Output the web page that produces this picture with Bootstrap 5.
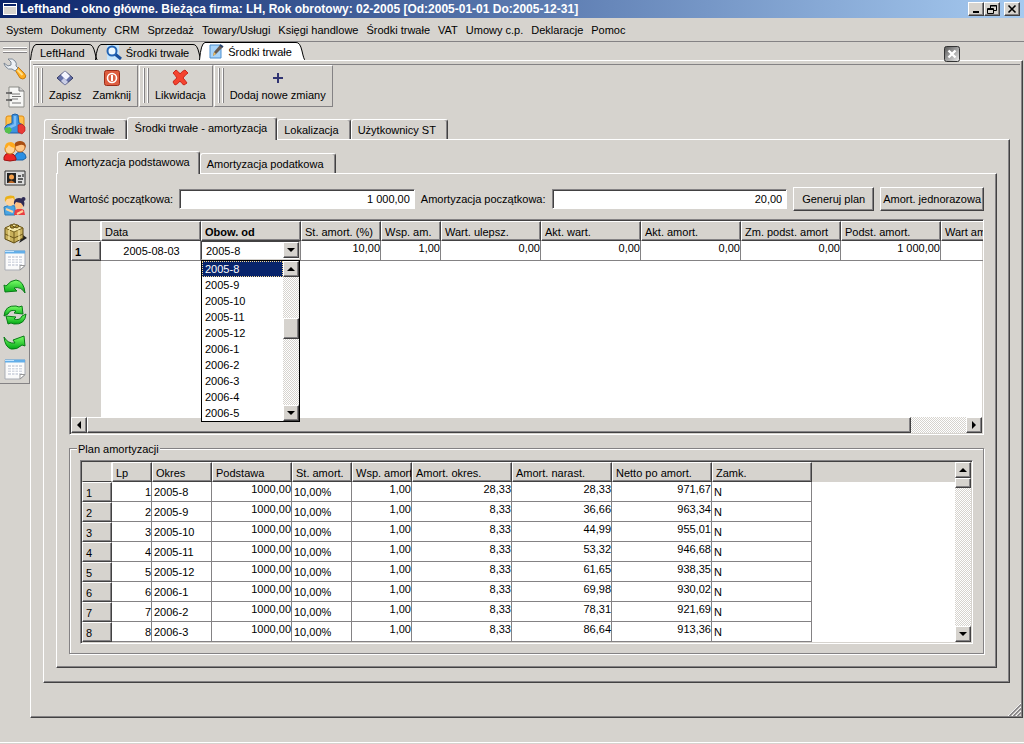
<!DOCTYPE html>
<html lang="pl">
<head>
<meta charset="utf-8">
<meta name="viewport" content="width=device-width, initial-scale=1">
<title>Lefthand - okno główne</title>
<link rel="stylesheet" href="https://cdn.jsdelivr.net/npm/bootstrap@5.3.0/dist/css/bootstrap.min.css">
<style>
:root{--face:#d6d3ce;--shade:#848284;--deep:#424142}
body{background:var(--face);color:#000;font:11px/14px "Liberation Sans",Arial,sans-serif;min-height:100vh}
button,input,select{font:inherit;color:inherit}
svg{display:block;flex:none}
.titlebar{height:18px;padding:0 4px 0 3px;gap:3px;background:linear-gradient(90deg,#0a246a,#a6caf0);color:#fff;font-size:12px;font-weight:bold}
.face-btn{background:var(--face);border:1px solid;border-color:#fff var(--deep) var(--deep) #fff;box-shadow:inset -1px -1px var(--shade);padding:0;border-radius:0;display:flex;align-items:center;justify-content:center}
.win-btn{width:16px;height:14px}
.menubar{height:24px;border-bottom:1px solid var(--shade);padding:0 6px;gap:8px}
.menubar a{color:#000;text-decoration:none;padding:0}
.sidebar{width:30px;height:342px;border:solid var(--shade);border-width:0 1px 1px 0;padding:6px 0 3px 3px}
.sidebar button,.tool button,.doctab,.close-doc{border:0;background:none;padding:0}
.grip-h{width:24px;height:5px;border:solid var(--shade);border-width:1px 0;box-shadow:0 -1px #fff,inset 0 -1px #fff}
.grip-v{width:5px;height:35px;margin-right:-5px;border:solid var(--shade);border-width:0 1px;box-shadow:-1px 0 #fff,inset -1px 0 #fff;flex:none}
.workarea{min-width:0}
.doctabs{height:18px;z-index:2}
.doctab{display:flex;height:16px;margin-right:-3px}
.doctab .face{border-top:1px solid #000;display:flex;align-items:center;gap:4px;height:16px}
.doctab.active{height:18px;z-index:1}
.doctab.active .face{background:#fff;height:18px}
.close-doc{width:16px;height:16px;margin:0 64px -2px auto}
.window{border:1px solid;border-color:#fff var(--deep) var(--deep) #fff;box-shadow:inset -1px -1px var(--shade);position:relative;padding-bottom:34px;margin-right:1px}
.toolbar{border-top:1px solid var(--shade);margin:3px 2px 0}
.tool{border:1px solid;border-color:#fff var(--shade) var(--shade) #fff;height:42px;padding:2px 6px 2px 4px;gap:11px;margin-right:1px}
.tool button{display:flex;flex-direction:column;align-items:center;gap:1px}
.tabset{padding:0 12px}
.tabset-outer{padding-top:10px}
.sheet{border:1px solid;border-color:#fff var(--deep) var(--deep) #fff;box-shadow:inset -1px -1px var(--shade)}
.sheet-main{padding-top:11px;padding-bottom:14px}
.sheet-inner{padding-top:13px;padding-bottom:13px}
.tabrow{padding-left:1px;align-items:flex-end}
.tabrow button{background:var(--face);border:1px solid;border-color:#fff var(--deep) transparent #fff;border-bottom:0;border-radius:3px 3px 0 0;box-shadow:inset -1px 0 var(--shade);height:20px;padding:0 11px 0 6px;text-align:left}
.tabrow button.active{height:23px;margin-bottom:-1px;padding:0 9px 3px 7px;z-index:1}
.field{height:20px;min-width:0;flex:1;border:1px solid;border-color:var(--shade) #fff #fff var(--shade);box-shadow:inset 1px 1px var(--deep);outline:0;background:#fff;text-align:right;padding:0 4px;border-radius:0}
.cmd{height:24px}
.cmd-wide{padding:0 2px}
.formrow{gap:6px}
.grid-box{border:1px solid;border-color:var(--shade) #fff #fff var(--shade);box-shadow:inset 1px 1px var(--deep);padding:1px;overflow:hidden;position:relative}
.grid-body{background:linear-gradient(90deg,var(--face) 30px,#fff 30px)}
.plan-body{background:linear-gradient(var(--face) 20px,transparent 20px),linear-gradient(90deg,var(--face) 30px,#fff 30px)}
.data-grid{table-layout:fixed;border-collapse:separate;border-spacing:0;width:1px}
.data-grid th,.data-grid td{height:20px;padding:0;white-space:nowrap;vertical-align:top}
.data-grid th{background:var(--face);font-weight:normal;border:1px solid;border-color:#fff var(--deep) var(--deep) #fff;box-shadow:inset -1px -1px var(--shade);padding:3px 0 0 3px;overflow:hidden;line-height:14px}
.data-grid thead th:first-child{border-color:var(--face) #fff var(--deep) var(--face);box-shadow:none}
.data-grid td{border:solid var(--shade);border-width:0 1px 1px 0}
.data-grid .num{text-align:right}
.data-grid .txt{padding:3px 0 0 2px;line-height:14px}
.track{background:repeating-conic-gradient(#fff 0 25%,#d6d3ce 0 50%) 0 0/2px 2px}
.sb{width:16px;height:16px;flex:none}
.h-thumb{width:90.5%}
.v-thumb{height:21px;margin-top:41px}
.v-thumb-small{height:10px}
.combo{height:19px;border:1px solid var(--shade);border-color:var(--deep) var(--face) var(--face) var(--deep);background:#fff;display:flex}
.combo select{appearance:none;border:0;background:#fff;padding:0 4px;flex:1;min-width:0;outline:0}
.combo-list{display:flex;position:absolute;z-index:5;top:40px;left:131px;width:99px;border:1px solid #000;background:#fff}
.combo-list ul{list-style:none;margin:0;padding:0;flex:1}
.combo-list li{height:16px;line-height:16px;padding-left:3px}
.combo-list li[aria-selected=true]{background:#08246b;color:#fff;outline:1px dotted #f7db94;outline-offset:-1px}
.plan{border:1px solid var(--shade);box-shadow:1px 1px #fff,inset 1px 1px #fff;padding:11px 10px 9px;margin:13px 0 0}
.plan legend{float:none;width:auto;font-size:11px;line-height:14px;padding:0 1px;margin:-7px 0 0;background:var(--face);position:absolute;top:0;left:7px}
.statusline{border-bottom:1px solid #fff;height:25px;margin-bottom:1px}
.corner{position:absolute;right:1px;bottom:1px}
</style>
</head>
<body class="d-flex flex-column">
<svg width="0" height="0" class="position-absolute">
 <defs>
  <linearGradient id="gr" x2="0" y2="1"><stop stop-color="#7dff6a"/><stop offset="1" stop-color="#00a814"/></linearGradient>
  <linearGradient id="gy" x2="1" y2="1"><stop stop-color="#555"/><stop offset="1" stop-color="#eee"/></linearGradient>
  <symbol id="up" viewBox="0 0 14 14"><path d="M7 5l4 4H3z"/></symbol>
  <symbol id="dn" viewBox="0 0 14 14"><path d="M3 5h8L7 9z"/></symbol>
  <symbol id="sheetic" viewBox="0 0 22 22"><path d="M1 2h20v15l-5 4H1z" fill="#fafafa" stroke="#a9adb5"/><path d="M1 1.500h20v3H1z" fill="#63aee8"/><path d="M1 2h9v1H1z" fill="#bfe3ff"/><path d="M4 7h14v10H4z" fill="#d5d9e2"/><path d="M4 9.500h14M4 12h14M4 14.500h14M7.500 7v10M11 7v10M14.500 7v10" stroke="#fff"/><path d="M16 21v-4.500h5z" fill="#fff" stroke="#999"/></symbol>
 </defs>
</svg>

<header class="titlebar d-flex align-items-center">
 <svg width="14" height="12" viewBox="0 0 14 12"><path d="M0 0h14v12H0z" fill="#fff"/><path d="M1 1h12v2H1z" fill="#0a246a"/><path d="M1 4h12v7H1z" fill="#d6d3ce"/></svg>
 <span class="text-nowrap">Lefthand - okno główne. Bieżąca firma: LH, Rok obrotowy: 02-2005 [Od:2005-01-01 Do:2005-12-31]</span>
 <div class="d-flex ms-auto">
  <button class="face-btn win-btn" aria-label="Minimalizuj"><svg width="12" height="10"><path d="M3 7h6v2H3z"/></svg></button>
  <button class="face-btn win-btn" aria-label="Przywróć"><svg width="12" height="10" fill="none" stroke="#000"><path d="M4.500 4V1.500h6v5H8M4 2h7M1.500 4.500h6v5h-6zM1 5.500h7"/></svg></button>
  <button class="face-btn win-btn ms-1" aria-label="Zamknij"><svg width="12" height="10"><path d="M2.500 1.500l7 7M9.500 1.500l-7 7" stroke="#000" stroke-width="1.600"/></svg></button>
 </div>
</header>

<nav class="menubar d-flex align-items-center">
 <a href="#">System</a><a href="#">Dokumenty</a><a href="#">CRM</a><a href="#">Sprzedaż</a><a href="#">Towary/Usługi</a><a href="#">Księgi handlowe</a><a href="#">Środki trwałe</a><a href="#">VAT</a><a href="#">Umowy c.p.</a><a href="#">Deklaracje</a><a href="#">Pomoc</a>
</nav>

<div class="d-flex flex-grow-1">
 <aside class="sidebar d-flex flex-column justify-content-between flex-shrink-0">
  <div class="grip-h"></div>
  <button aria-label="Narzędzia"><svg width="24" height="22" viewBox="0 0 24 22"><path d="M12 12l3-3 6 6q3 3 1 5t-5 0z" fill="#ffad1f" stroke="#b96c00" stroke-width=".8"/><path d="M14.500 12l5 5" stroke="#ffe08c" stroke-width="2"/><path d="M1 5l4 3 3-1V4L5 1q5-1 7 2 2 2 1 5l2 2-3 3-3-2q-4 1-6-2Q1 7 1 5z" fill="#edf1f5" stroke="#7d8895"/></svg></button>
  <button aria-label="Dokumenty"><svg width="24" height="22" viewBox="0 0 24 22"><path d="M6 1h10l5 4v16H6z" fill="#f7f7f5" stroke="#8b8b86"/><path d="M16 1v4h5" fill="#ccc" stroke="#777"/><path d="M9 8h8M9 10.500h9M9 13h6M9 17h9" stroke="#777"/><path d="M3 7h4M3 14h4" stroke="#555" stroke-width="1.500"/><circle cx="8" cy="7" r="1.200" fill="#555"/><circle cx="8" cy="14" r="1.200" fill="#555"/></svg></button>
  <button aria-label="Obiekty"><svg width="24" height="22" viewBox="0 0 24 22"><rect x="3" y="3" width="18" height="15" rx="2" fill="#ffc04c" stroke="#e08a10"/><path d="M9 2q3-2 6 0l1 8 4 2q3 8-3 8H6q-5-1-4-6 2-3 5-3l2-1z" fill="#3d93df" stroke="#1d60a8"/><path d="M12 3v9l-7 3" stroke="#7dbdf5" stroke-width="2.500" fill="none"/><path d="M2 15l5-1 2 3-3 4-4-2z" fill="#57c14b"/><path d="M15 12l4-1 3 3v4l-3 3-4-2z" fill="#e93b36" stroke="#b3161a" stroke-width=".6"/></svg></button>
  <button aria-label="Kontrahenci"><svg width="24" height="22" viewBox="0 0 24 22"><path d="M12 20v-4q1-4 6-4 5 1 5 6l-3 2z" fill="#298fe4" stroke="#1a62a5"/><circle cx="17" cy="7" r="5" fill="#ffc786" stroke="#bd6b27"/><path d="M11 7q0-6 6-6t6 7q-2-4-6-3z" fill="#a94f12"/><path d="M1 20v-3q1-4 6-4 5 1 6 5v2q-6 2-12 0z" fill="#ec2625" stroke="#9d1414"/><circle cx="7" cy="9" r="5" fill="#ffd394" stroke="#c77816"/><path d="M2 9q-1-7 6-7 5 1 4 6-5-1-6-3-2 3-4 4z" fill="#ffab1d"/></svg></button>
  <button aria-label="Kadry"><svg width="24" height="22" viewBox="0 0 24 22"><path d="M2 4h20v14H2z" fill="#ddd" stroke="#333"/><path d="M4 6h9v10H4z" fill="#222"/><circle cx="8.500" cy="10" r="2.500" fill="#f5a04a"/><path d="M5 16q3-5 7 0z" fill="#bd6827"/><path d="M15 9h3M15 12h5M15 15h4M20 7v3" stroke="#333" stroke-width="1.300"/></svg></button>
  <button aria-label="Pracownicy"><svg width="24" height="22" viewBox="0 0 24 22"><path d="M2 20l-1-8q5-3 11-1v9z" fill="#4aa5e4" stroke="#2f7cb5"/><circle cx="7" cy="6.500" r="4.500" fill="#ffd39a"/><path d="M2 7q-1-6 3-6 2-1 6 0 1 2 1 5l-2-3-6 1z" fill="#eab119"/><path d="M11 20l1-5q5-3 9 0l1 5z" fill="#e93e42"/><circle cx="16" cy="10" r="4" fill="#ffc184"/><path d="M11 10q-1-7 5-7 7 0 5 9l-3-4-5-1z" fill="#2f2b55"/><circle cx="20.500" cy="4" r="2" fill="#2f2b55"/><path d="M3 14l7 3M20 16l-6 3" stroke="#ffd39a" stroke-width="2"/></svg></button>
  <button aria-label="Magazyn"><svg width="24" height="22" viewBox="0 0 24 22"><path d="M20 13l4 3-8 5z" fill="#222"/><path d="M2 6l9-4 9 4v10l-9 5-9-4z" fill="#c9b15c" stroke="#5d4a12"/><path d="M2 6l9-4 9 4-9 4z" fill="#f3e7a6" stroke="#77611f"/><path d="M11 10v11M2 12l9 4 9-4" stroke="#6e581a" fill="none"/><path d="M6 8v10M16 8v10M6 4l9 4M16 4L6 8" stroke="#fff1af" fill="none"/><path d="M11 5q-4-4-4-1t4 2q3-5 5-2-1 3-5 1" fill="#b89a35" stroke="#584511"/></svg></button>
  <button aria-label="Zestawienie"><svg width="24" height="22"><use href="#sheetic"/></svg></button>
  <button aria-label="Cofnij"><svg width="24" height="22" viewBox="0 0 24 22"><path d="M1 9l2 1q5-6 10-6 8 1 9 13-4-7-11-5l3 3-12 1z" fill="url(#gr)" stroke="#087b16"/></svg></button>
  <button aria-label="Odśwież"><svg width="24" height="22" viewBox="0 0 24 22"><path d="M1 12Q2 1 13 2l3 1 3-1 1 8-9-1 2-2Q7 5 5 10z" fill="url(#gr)" stroke="#087b16"/><path d="M23 10q-1 11-12 10l-3-1-3 1-2-8 10 1-2 2q6 2 8-3z" fill="url(#gr)" stroke="#087b16"/></svg></button>
  <button aria-label="Ponów"><svg width="24" height="22" viewBox="0 0 24 22"><path d="M1 6q4 7 11 6l-2-3 11-4 1 10-3-1q-5 5-11 4Q2 16 1 6z" fill="url(#gr)" stroke="#087b16"/></svg></button>
  <button aria-label="Raport"><svg width="24" height="22"><use href="#sheetic"/></svg></button>
 </aside>

 <main class="workarea flex-grow-1 d-flex flex-column">
  <div class="doctabs d-flex align-items-end position-relative">
   <button class="doctab"><svg width="6" height="16"><path d="M.5 16Q2 1 6 .5" fill="none" stroke="#000"/></svg><span class="face px-1">LeftHand</span><svg width="9" height="16"><path d="M0 .5Q4 0 6 9T9 16" fill="none" stroke="#000"/></svg></button>
   <button class="doctab"><svg width="6" height="16"><path d="M.5 16Q2 1 6 .5" fill="none" stroke="#000"/></svg><span class="face px-1"><svg width="17" height="15" viewBox="0 0 17 15"><path d="M2 0h12v15H2z" fill="#c5e4fb"/><path d="M10 9l6 5" stroke="#164e9c" stroke-width="3"/><circle cx="7" cy="6" r="4.500" fill="#edf8ff" stroke="#2464b4" stroke-width="2"/></svg>Środki trwałe</span><svg width="9" height="16"><path d="M0 .5Q4 0 6 9T9 16" fill="none" stroke="#000"/></svg></button>
   <button class="doctab active"><svg width="6" height="18"><path d="M.5 18Q2 1 6 .5V18z" fill="#fff"/><path d="M.5 18Q2 1 6 .5" fill="none" stroke="#000"/></svg><span class="face px-1"><svg width="15" height="15" viewBox="0 0 15 15"><path d="M1 1h11v13H1z" fill="#a8d4fa" stroke="#4c8fcf"/><path d="M4 12l1-4 6-7 3 2-7 7z" fill="#675b52"/><path d="M4 12l1-4 2 2z" fill="#ecbd63"/><path d="M11 1l3 2" stroke="#28426c" stroke-width="2"/></svg>Środki trwałe</span><svg width="9" height="18"><path d="M0 .5Q4 0 6 9T9 18H0z" fill="#fff"/><path d="M0 .5Q4 0 6 9T9 18" fill="none" stroke="#000"/></svg></button>
   <button class="close-doc" aria-label="Zamknij kartę"><svg width="16" height="16"><rect x=".5" y=".5" width="15" height="15" rx="2" fill="url(#gy)" stroke="#333"/><path d="M4.500 4.500l7 7M11.500 4.500l-7 7" stroke="#fff" stroke-width="2.400"/></svg></button>
  </div>

  <section class="window flex-grow-1 d-flex flex-column">
   <div class="toolbar d-flex">
    <div class="tool d-flex"><div class="grip-v"></div>
     <button><svg width="20" height="19" viewBox="0 0 20 19"><path d="M2 10l8-7 8 7-8 7z" fill="#6672ab" stroke="#333965"/><path d="M6 7l4-4 5 5-4 4z" fill="#f4f5ff"/><path d="M6 13l3-3 4 4-3 3z" fill="#c9cde5"/></svg>Zapisz</button>
     <button><svg width="20" height="19" viewBox="0 0 20 19"><rect x="2.500" y="2.500" width="15" height="15" rx="2" fill="#dd5d3f" stroke="#9b2b18"/><circle cx="10" cy="10" r="4.500" fill="none" stroke="#fff" stroke-width="1.600"/><path d="M10 7v6" stroke="#fff" stroke-width="2"/></svg>Zamknij</button>
    </div>
    <div class="tool d-flex"><div class="grip-v"></div>
     <button><svg width="20" height="19" viewBox="0 0 20 19"><path d="M3 5l3-3q3 2 4 4 2-3 5-4l3 3q-3 2-5 5 2 2 4 5l-3 2q-2-1-4-4-2 3-5 4l-2-3q1-2 4-4-2-3-4-5z" fill="#f4432f" stroke="#c9281d"/></svg>Likwidacja</button>
    </div>
    <div class="tool d-flex"><div class="grip-v"></div>
     <button><svg width="20" height="19"><path d="M10 5v10M5 10h10" stroke="#313473" stroke-width="2"/></svg>Dodaj nowe zmiany</button>
    </div>
   </div>

   <div class="tabset tabset-outer flex-grow-1 d-flex flex-column">
    <div class="tabrow d-flex" role="tablist">
     <button role="tab">Środki trwałe</button><button role="tab" class="active position-relative" aria-selected="true">Środki trwałe - amortyzacja</button><button role="tab">Lokalizacja</button><button role="tab">Użytkownicy ST</button>
    </div>
    <div class="sheet sheet-main tabset flex-grow-1 d-flex flex-column">
     <div class="tabrow d-flex" role="tablist">
      <button role="tab" class="active position-relative" aria-selected="true">Amortyzacja podstawowa</button><button role="tab">Amortyzacja podatkowa</button>
     </div>
     <div class="sheet sheet-inner px-2 tabset flex-grow-1 d-flex flex-column" style="">
      <div class="formrow d-flex align-items-center mb-2 mx-1">
       <label for="wp">Wartość początkowa:</label>
       <input id="wp" class="field" value="1 000,00">
       <label for="ap">Amortyzacja początkowa:</label>
       <input id="ap" class="field" value="20,00">
       <button class="face-btn cmd px-2">Generuj plan</button>
       <button class="face-btn cmd cmd-wide">Amort. jednorazowa</button>
      </div>

      <div class="grid-box mx-1 flex-grow-1 d-flex flex-column">
       <div class="grid-body flex-grow-1">
        <table class="data-grid">
         <colgroup><col style="width:30px"><col style="width:100px"><col style="width:100px"><col style="width:80px"><col style="width:60px"><col style="width:100px"><col style="width:100px"><col style="width:100px"><col style="width:100px"><col style="width:100px"><col style="width:100px"></colgroup>
         <thead><tr><th></th><th>Data</th><th class="fw-bold">Obow. od</th><th>St. amort. (%)</th><th>Wsp. am.</th><th>Wart. ulepsz.</th><th>Akt. wart.</th><th>Akt. amort.</th><th>Zm. podst. amort</th><th>Podst. amort.</th><th>Wart am</th></tr></thead>
         <tbody><tr><th class="fw-bold">1</th><td class="txt text-center">2005-08-03</td><td><div class="combo"><select aria-label="Obow. od"><option>2005-8</option></select><button class="face-btn sb" aria-label="Rozwiń"><svg width="14" height="14"><use href="#dn"/></svg></button></div></td><td class="num">10,00</td><td class="num">1,00</td><td class="num">0,00</td><td class="num">0,00</td><td class="num">0,00</td><td class="num">0,00</td><td class="num">1 000,00</td><td></td></tr></tbody>
        </table>
       </div>
       <div class="d-flex track">
        <button class="face-btn sb" aria-label="W lewo"><svg width="14" height="14"><path d="M5 7l4-4v8z"/></svg></button>
        <div class="face-btn h-thumb"></div>
        <button class="face-btn sb ms-auto" aria-label="W prawo"><svg width="14" height="14"><path d="M9 7L5 3v8z"/></svg></button>
       </div>
       <div class="combo-list">
        <ul role="listbox" aria-label="Obow. od"><li role="option" aria-selected="true">2005-8</li><li role="option">2005-9</li><li role="option">2005-10</li><li role="option">2005-11</li><li role="option">2005-12</li><li role="option">2006-1</li><li role="option">2006-2</li><li role="option">2006-3</li><li role="option">2006-4</li><li role="option">2006-5</li></ul>
        <div class="track d-flex flex-column">
         <button class="face-btn sb" aria-label="W górę"><svg width="14" height="14"><use href="#up"/></svg></button>
         <div class="face-btn v-thumb"></div>
         <button class="face-btn sb mt-auto" aria-label="W dół"><svg width="14" height="14"><use href="#dn"/></svg></button>
        </div>
       </div>
      </div>

      <fieldset class="plan mx-1 position-relative">
       <legend>Plan amortyzacji</legend>
       <div class="grid-box d-flex">
        <div class="plan-body flex-grow-1">
         <table class="data-grid">
          <colgroup><col style="width:30px"><col style="width:40px"><col style="width:60px"><col style="width:80px"><col style="width:60px"><col style="width:60px"><col style="width:100px"><col style="width:100px"><col style="width:100px"><col style="width:100px"></colgroup>
          <thead><tr><th></th><th>Lp</th><th>Okres</th><th>Podstawa</th><th>St. amort.</th><th>Wsp. amort</th><th>Amort. okres.</th><th>Amort. narast.</th><th>Netto po amort.</th><th>Zamk.</th></tr></thead>
          <tbody id="plan"></tbody>
         </table>
        </div>
        <div class="track d-flex flex-column">
         <button class="face-btn sb" aria-label="W górę"><svg width="14" height="14"><use href="#up"/></svg></button>
         <div class="face-btn v-thumb-small"></div>
         <button class="face-btn sb mt-auto" aria-label="W dół"><svg width="14" height="14"><use href="#dn"/></svg></button>
        </div>
       </div>
      </fieldset>
     </div>
    </div>
   </div>
   <svg class="corner" width="13" height="13"><path d="M0 13L13 0M4 13l9-9M8 13l5-5" stroke="#fff"/><path d="M1.500 13L13 1.500M5.500 13L13 5.500M9.500 13L13 9.500" stroke="#848284" stroke-width="1.500"/></svg>
  </section>
 </main>
</div>
<footer class="statusline"></footer>

<script>
const rows=[["2005-8","28,33","28,33","971,67"],["2005-9","8,33","36,66","963,34"],["2005-10","8,33","44,99","955,01"],["2005-11","8,33","53,32","946,68"],["2005-12","8,33","61,65","938,35"],["2006-1","8,33","69,98","930,02"],["2006-2","8,33","78,31","921,69"],["2006-3","8,33","86,64","913,36"]];
const num=v=>`<td class="num">${v}</td>`, txt=v=>`<td class="txt">${v}</td>`;
document.getElementById("plan").innerHTML=rows.map((r,i)=>`<tr><th>${i+1}</th><td class="txt text-end">${i+1}</td>${txt(r[0])}${num("1000,00")}${txt("10,00%")}${num("1,00")}${num(r[1])}${num(r[2])}${num(r[3])}${txt("N")}</tr>`).join("");
</script>
<script src="https://cdn.jsdelivr.net/npm/bootstrap@5.3.0/dist/js/bootstrap.bundle.min.js"></script>
</body>
</html>
